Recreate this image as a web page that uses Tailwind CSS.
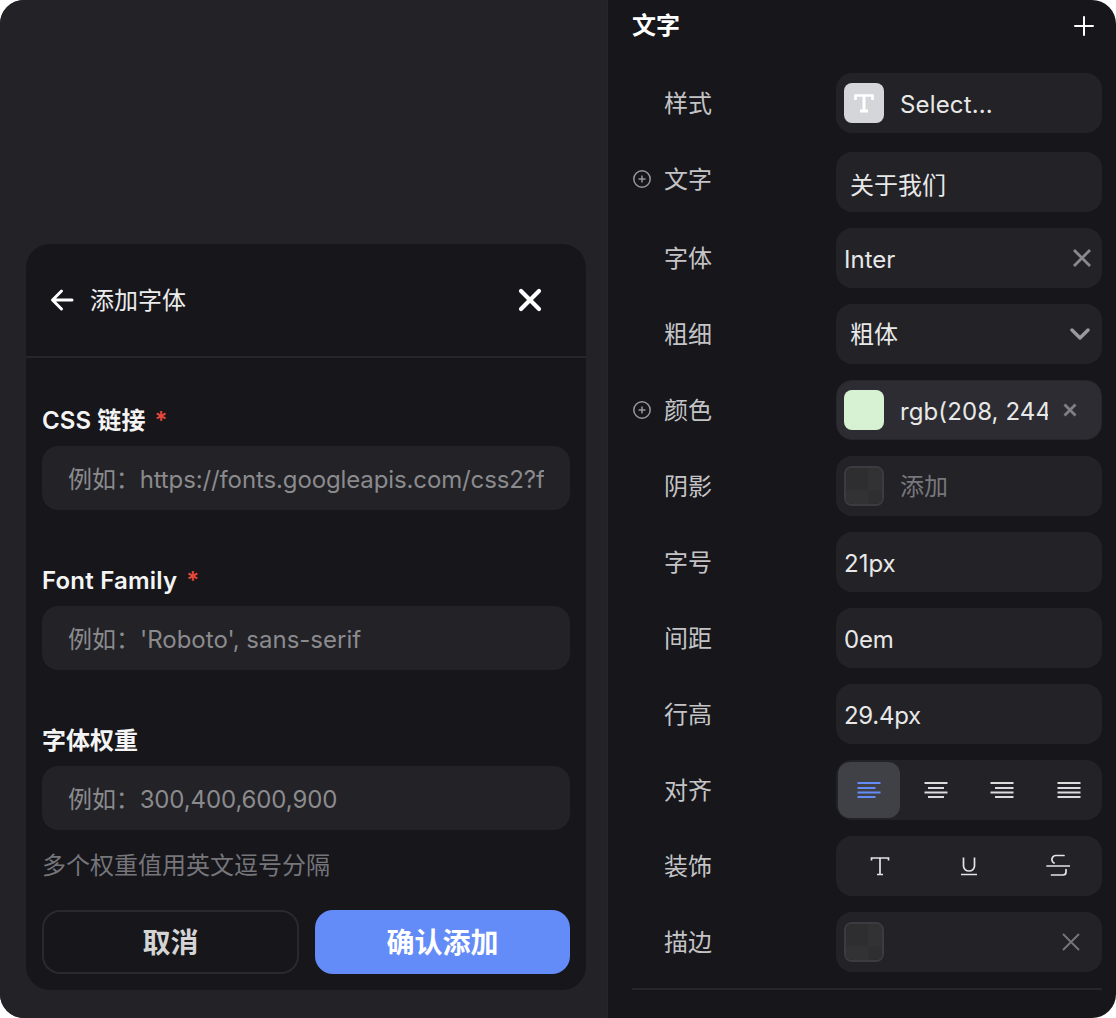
<!DOCTYPE html>
<html lang="zh-CN">
<head>
  <meta charset="UTF-8">
  <title>添加字体</title>
  <script src="https://cdn.jsdelivr.net/npm/@tailwindcss/browser@4"></script>
</head>
<body class="bg-white font-['Inter','Noto_Sans_CJK_SC',sans-serif]">
  <div class="flex w-[1116px] h-[1018px] rounded-[24px] overflow-hidden bg-[#16161b]">

    <!-- left: modal over the canvas -->
    <div class="w-[607px] h-full shrink-0 bg-[#222227] flex flex-col justify-end pl-[26px] pb-[28px]">
      <div class="w-[560px] h-[746px] rounded-[24px] bg-[#16161b] flex flex-col">
        <div class="h-[114px] shrink-0 border-b-2 border-[#26262c] flex items-center pl-[24px] pr-[44px]">
          <svg class="w-[24px] h-[24px] text-white" viewBox="0 0 24 24" fill="none" stroke="currentColor" stroke-width="3" stroke-linecap="round" stroke-linejoin="round"><path d="M22 12H3M11.500 3l-9 9 9 9"/></svg>
          <span class="ml-[16px] pt-[2px] text-[24px] text-[#ececec]">添加字体</span>
          <svg class="ml-auto w-[24px] h-[24px] text-white" viewBox="0 0 24 24" fill="none" stroke="currentColor" stroke-width="4.200" stroke-linecap="round"><path d="M3 3l18 18M21 3L3 21"/></svg>
        </div>

        <div class="flex-1 px-[16px] pt-[46px]">
          <label class="flex h-[32px] items-center pt-[2px] text-[24px] leading-[32px] font-semibold text-[#f4f4f4] tracking-[0.1px]">CSS 链接<span class="ml-[9px] text-[#e5483a]">*</span></label>
          <input class="mt-[10px] block w-full h-[64px] rounded-[16px] bg-[#222227] px-[26px] pt-[2px] text-[24px] tracking-[-0.12px] text-[#e8e8e8] placeholder:text-[#8b8b8e] outline-none" placeholder="例如：https://fonts.googleapis.com/css2?family=Roboto">

          <label class="mt-[54px] flex h-[32px] items-center pt-[2px] text-[24px] leading-[32px] font-semibold text-[#f4f4f4] tracking-[0.2px]">Font Family<span class="ml-[9px] text-[#e5483a]">*</span></label>
          <input class="mt-[10px] block w-full h-[64px] rounded-[16px] bg-[#222227] px-[26px] pt-[2px] text-[24px] text-[#e8e8e8] placeholder:text-[#8b8b8e] outline-none" placeholder="例如：'Roboto', sans-serif">

          <label class="mt-[54px] flex h-[32px] items-center pt-[2px] text-[24px] leading-[32px] font-semibold text-[#f4f4f4]">字体权重</label>
          <input class="mt-[10px] block w-full h-[64px] rounded-[16px] bg-[#222227] px-[26px] pt-[2px] text-[24px] tracking-[-0.12px] text-[#e8e8e8] placeholder:text-[#8b8b8e] outline-none" placeholder="例如：300,400,600,900">

          <p class="mt-[20px] h-[32px] text-[24px] leading-[32px] text-[#75757a]">多个权重值用英文逗号分隔</p>

          <div class="mt-[28px] flex gap-[16px]">
            <button class="w-[257px] h-[64px] pt-[2px] rounded-[18px] border-2 border-[#29292f] text-[28px] font-bold text-[#d4d4d4]">取消</button>
            <button class="flex-1 h-[64px] pt-[2px] rounded-[18px] bg-[#648cf8] text-[28px] font-bold text-white">确认添加</button>
          </div>
        </div>
      </div>
    </div>

    <!-- right: properties panel -->
    <div class="flex-1 border-l border-[#26262c] pl-[24px] pr-[14px] flex flex-col">
      <div class="h-[51px] flex items-center justify-between">
        <span class="text-[24px] font-semibold text-white">文字</span>
        <svg class="mr-[8px] w-[20px] h-[20px] text-white" viewBox="0 0 20 20" fill="none" stroke="currentColor" stroke-width="2" stroke-linecap="round"><path d="M10 1v18M1 10h18"/></svg>
      </div>

      <!-- 样式 -->
      <div class="mt-[22px] flex h-[60px] items-center">
        <span class="pl-[32px] pt-[2px] w-[204px] text-[24px] text-[#c4c4c6]">样式</span>
        <div class="flex-1 h-full rounded-[16px] bg-[#222227] flex items-center pl-[8px]">
          <div class="w-[40px] h-[40px] rounded-[8px] bg-[#d4d6da] flex items-center justify-center">
            <svg class="w-[20px] h-[20px]" viewBox="0 0 20 20" fill="none" stroke="#fff" stroke-width="3"><path d="M10 2.500V18M6 18h8"/><path d="M1.500 7V2.500h17V7" stroke-width="2.600"/></svg>
          </div>
          <span class="ml-[16px] pt-[4px] text-[24px] text-[#e8e8e8] tracking-[0.15px]">Select...</span>
        </div>
      </div>

      <!-- 文字 -->
      <div class="mt-[19px] flex h-[60px]">
        <div class="w-[204px] h-[54px] flex items-center text-[24px] text-[#c4c4c6]">
          <svg class="ml-[1px] mr-[13px] w-[18px] h-[18px] text-[#98989b]" viewBox="0 0 18 18" fill="none" stroke="currentColor" stroke-width="1.500"><circle cx="9" cy="9" r="8.200"/><path d="M9 5.500v7M5.500 9h7"/></svg>
          <span class="pt-[2px]">文字</span>
        </div>
        <div class="flex-1 h-full rounded-[16px] bg-[#222227] flex items-center pl-[14px] pt-[8px] text-[24px] text-[#e8e8e8]">关于我们</div>
      </div>

      <!-- 字体 -->
      <div class="mt-[16px] flex h-[60px] items-center">
        <span class="pl-[32px] pt-[2px] w-[204px] text-[24px] text-[#c4c4c6]">字体</span>
        <div class="flex-1 h-full rounded-[16px] bg-[#222227] flex items-center pl-[8px] pr-[11px] text-[24px] text-[#e8e8e8] justify-between">
          <span class="pt-[4px]">Inter</span>
          <svg class="w-[18px] h-[18px] text-[#8a8a8e]" viewBox="0 0 18 18" fill="none" stroke="currentColor" stroke-width="2.800"><path d="M1 1l16 16M17 1L1 17"/></svg>
        </div>
      </div>

      <!-- 粗细 -->
      <div class="mt-[16px] flex h-[60px] items-center">
        <span class="pl-[32px] pt-[2px] w-[204px] text-[24px] text-[#c4c4c6]">粗细</span>
        <div class="flex-1 h-full rounded-[16px] bg-[#222227] flex items-center pl-[14px] pr-[12px] text-[24px] text-[#e8e8e8] justify-between">
          <span class="pt-[2px]">粗体</span>
          <svg class="w-[20px] h-[12px] text-[#9a9a9e]" viewBox="0 0 20 12" fill="none" stroke="currentColor" stroke-width="3.400" stroke-linecap="round" stroke-linejoin="round"><path d="M2 2l8 8 8-8"/></svg>
        </div>
      </div>

      <!-- 颜色 -->
      <div class="mt-[16px] flex h-[60px] items-center">
        <div class="w-[204px] flex items-center text-[24px] text-[#c4c4c6]">
          <svg class="ml-[1px] mr-[13px] w-[18px] h-[18px] text-[#98989b]" viewBox="0 0 18 18" fill="none" stroke="currentColor" stroke-width="1.500"><circle cx="9" cy="9" r="8.200"/><path d="M9 5.500v7M5.500 9h7"/></svg>
          <span class="pt-[2px]">颜色</span>
        </div>
        <div class="flex-1 h-full rounded-[16px] bg-[#2c2c32] border border-[#26262b] flex items-center pl-[7px] text-[24px] text-[#e8e8e8]">
          <div class="w-[40px] h-[40px] rounded-[8px] bg-[#d7f2d2] shrink-0"></div>
          <input class="ml-[16px] w-[148px] pt-[4px] tracking-[0.1px] bg-transparent outline-none" value="rgb(208, 244, 209)">
          <svg class="ml-[15px] w-[14px] h-[14px] text-[#808084]" viewBox="0 0 14 14" fill="none" stroke="currentColor" stroke-width="2.800"><path d="M1.500 1.500l11 11M12.500 1.500l-11 11"/></svg>
        </div>
      </div>

      <!-- 阴影 -->
      <div class="mt-[16px] flex h-[60px] items-center">
        <span class="pl-[32px] pt-[2px] w-[204px] text-[24px] text-[#c4c4c6]">阴影</span>
        <div class="flex-1 h-full rounded-[16px] bg-[#222227] flex items-center pl-[8px] text-[24px] text-[#77777b]">
          <div class="w-[40px] h-[40px] rounded-[8px] border-2 border-[#3c3c40] grid grid-cols-[3fr_2fr] grid-rows-[3fr_2fr] overflow-hidden">
            <div class="bg-[#2e2e31]"></div><div class="bg-[#323235]"></div>
            <div class="bg-[#323235]"></div><div class="bg-[#2f2f32]"></div>
          </div>
          <span class="ml-[16px] pt-[2px]">添加</span>
        </div>
      </div>

      <!-- 字号 -->
      <div class="mt-[16px] flex h-[60px] items-center">
        <span class="pl-[32px] pt-[2px] w-[204px] text-[24px] text-[#c4c4c6]">字号</span>
        <div class="flex-1 h-full rounded-[16px] bg-[#222227] flex items-center pl-[8px] pt-[4px] text-[24px] text-[#e8e8e8]">21px</div>
      </div>

      <!-- 间距 -->
      <div class="mt-[16px] flex h-[60px] items-center">
        <span class="pl-[32px] pt-[2px] w-[204px] text-[24px] text-[#c4c4c6]">间距</span>
        <div class="flex-1 h-full rounded-[16px] bg-[#222227] flex items-center pl-[8px] pt-[4px] text-[24px] text-[#e8e8e8] tracking-[-0.2px]">0em</div>
      </div>

      <!-- 行高 -->
      <div class="mt-[16px] flex h-[60px] items-center">
        <span class="pl-[32px] pt-[2px] w-[204px] text-[24px] text-[#c4c4c6]">行高</span>
        <div class="flex-1 h-full rounded-[16px] bg-[#222227] flex items-center pl-[8px] pt-[4px] text-[24px] text-[#e8e8e8] tracking-[-0.3px]">29.4px</div>
      </div>

      <!-- 对齐 -->
      <div class="mt-[16px] flex h-[60px] items-center">
        <span class="pl-[32px] pt-[2px] w-[204px] text-[24px] text-[#c4c4c6]">对齐</span>
        <div class="flex-1 h-full rounded-[16px] bg-[#222227] flex items-center justify-between p-[2px]">
          <div class="w-[62px] h-[56px] rounded-[12px] bg-[#404146] flex items-center justify-center">
            <svg class="w-[24px] h-[18px] text-[#648cf8]" viewBox="0 0 24 18" fill="none" stroke="currentColor" stroke-width="2"><path d="M0.500 2h23M0.500 7h18M0.500 11.500h23M0.500 16h18"/></svg>
          </div>
          <div class="w-[62px] h-[56px] flex items-center justify-center">
            <svg class="w-[24px] h-[18px] text-[#dcdcdc]" viewBox="0 0 24 18" fill="none" stroke="currentColor" stroke-width="2"><path d="M0.500 2h23M4 7h16M0.500 11.500h23M4 16h16"/></svg>
          </div>
          <div class="w-[62px] h-[56px] flex items-center justify-center">
            <svg class="w-[24px] h-[18px] text-[#dcdcdc]" viewBox="0 0 24 18" fill="none" stroke="currentColor" stroke-width="2"><path d="M0.500 2h23M5 7h18.500M0.500 11.500h23M5 16h18.500"/></svg>
          </div>
          <div class="w-[62px] h-[56px] flex items-center justify-center">
            <svg class="w-[24px] h-[18px] text-[#dcdcdc]" viewBox="0 0 24 18" fill="none" stroke="currentColor" stroke-width="2"><path d="M0.500 2h23M0.500 7h23M0.500 11.500h23M0.500 16h23"/></svg>
          </div>
        </div>
      </div>

      <!-- 装饰 -->
      <div class="mt-[16px] flex h-[60px] items-center">
        <span class="pl-[32px] pt-[2px] w-[204px] text-[24px] text-[#c4c4c6]">装饰</span>
        <div class="flex-1 h-full rounded-[16px] bg-[#222227] grid grid-cols-3 items-center justify-items-center text-[#e4e4e4]">
          <svg class="w-[24px] h-[24px]" viewBox="0 0 24 24" fill="none" stroke="currentColor" stroke-width="1.700"><path d="M3.500 6.500V4h17v2.500M12 4v16.500M9 20.500h6"/></svg>
          <svg class="w-[24px] h-[24px]" viewBox="0 0 24 24" fill="none" stroke="currentColor" stroke-width="1.700"><path d="M6.500 3.500V12a5.500 5 0 0 0 11 0V3.500M4 20.500h16"/></svg>
          <svg class="w-[24px] h-[24px]" viewBox="0 0 24 24" fill="none" stroke="currentColor" stroke-width="1.700" stroke-linecap="round"><path d="M18 1.500H10a4 4 0 0 0-2 7.500M1 12h23M20 15.500v2.500a3 3 0 0 1-3 3H5.500"/></svg>
        </div>
      </div>

      <!-- 描边 -->
      <div class="mt-[16px] flex h-[60px] items-center">
        <span class="pl-[32px] pt-[2px] w-[204px] text-[24px] text-[#c4c4c6]">描边</span>
        <div class="flex-1 h-full rounded-[16px] bg-[#222227] flex items-center justify-between pl-[8px] pr-[22px]">
          <div class="w-[40px] h-[40px] rounded-[8px] border-2 border-[#3c3c40] grid grid-cols-[3fr_2fr] grid-rows-[3fr_2fr] overflow-hidden">
            <div class="bg-[#2e2e31]"></div><div class="bg-[#323235]"></div>
            <div class="bg-[#323235]"></div><div class="bg-[#2f2f32]"></div>
          </div>
          <svg class="w-[18px] h-[18px] text-[#77777b]" viewBox="0 0 18 18" fill="none" stroke="currentColor" stroke-width="1.800"><path d="M1 1l16 16M17 1L1 17"/></svg>
        </div>
      </div>

      <div class="mt-[16px] border-t-2 border-[#26262c]"></div>
    </div>
  </div>
</body>
</html>
